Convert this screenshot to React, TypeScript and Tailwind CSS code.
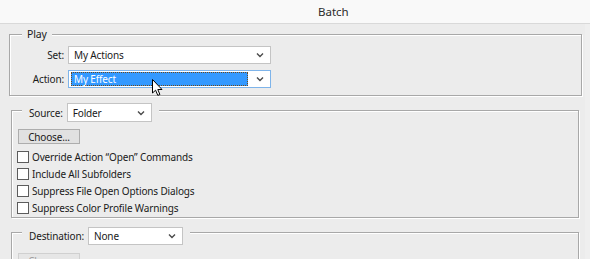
import React from "react";

function Chevron() {
  return (
    <svg width="8" height="6" viewBox="0 0 8 6" className="shrink-0">
      <path d="M1 1.5 L4 4.5 L7 1.5" fill="none" stroke="#4a4a4a" strokeWidth="1.4" />
    </svg>
  );
}

function Select({
  value,
  width,
  active,
}: {
  value: string;
  width: string;
  active?: boolean;
}) {
  return (
    <div
      className={`flex h-[18px] items-center justify-between bg-white pr-[6px] ${width} ${
        active ? "border border-[#7eb4ea] pl-[2px]" : "border border-[#c4c4c4] pl-[5px]"
      }`}
    >
      {active ? (
        <div className="mr-[8px] flex h-[14px] flex-1 items-center border border-dotted border-[#6b4a1e] bg-[#3399ff] pl-[2px] text-white">
          {value}
        </div>
      ) : (
        <span className="text-[#1a1a1a]">{value}</span>
      )}
      <Chevron />
    </div>
  );
}

function Check({ label }: { label: string }) {
  return (
    <div className="flex h-[17px] items-center gap-[3px] pl-[5px]">
      <div className="h-[12px] w-[12px] border border-[#5c5c5c] bg-white" />
      <span className="text-[#1a1a1a]">{label}</span>
    </div>
  );
}

const groupBorder =
  "border border-[#a8a8a8] shadow-[inset_1px_1px_0_#ffffff,1px_1px_0_#ffffff]";

export default function App() {
  return (
    <div
      className="relative h-[259px] w-[590px] overflow-hidden bg-[#efefef] text-[10px] leading-[16px] tracking-[-0.15px] text-[#1a1a1a]"
      style={{ fontFamily: '"Noto Sans", "Open Sans", Arial, sans-serif' }}
    >
      {/* title bar */}
      <div className="flex h-[24px] items-center border-b border-[#d9d9d9] bg-[#f9f9f9] pl-[318px] text-[11.5px] tracking-normal text-[#2b2b2b]">
        Batch
      </div>

      <div className="flex h-[235px] w-[585px] flex-col bg-[#ececec]">
        {/* Play group */}
        <div className={`ml-[9px] mt-[10px] h-[62px] w-[573px] shrink-0 ${groupBorder}`}>
          <div className="-mt-[9px] ml-[12px] w-fit bg-[#ececec] px-[5px] text-[10.5px]">Play</div>
          <div className="mt-[4px] flex items-center gap-[4px]">
            <div className="w-[54px] text-right">Set:</div>
            <Select value="My Actions" width="w-[203px]" />
          </div>
          <div className="mt-[6px] flex items-center gap-[4px]">
            <div className="w-[54px] text-right">Action:</div>
            <Select value="My Effect" width="w-[203px]" active />
          </div>
        </div>

        {/* Source group */}
        <div className={`ml-[11px] mt-[14px] h-[108px] w-[568px] shrink-0 ${groupBorder}`}>
          <div className="-mt-[8px] ml-[10px] flex w-fit items-center gap-[4px] bg-[#ececec] px-[7px]">
            <span>Source:</span>
            <div className="flex h-[19px] w-[85px] items-center justify-between border border-[#c4c4c4] bg-white pl-[5px] pr-[6px]">
              <span>Folder</span>
              <Chevron />
            </div>
          </div>
          <div className="ml-[6px] mt-[7px] flex h-[15px] w-[62px] items-center justify-center border border-[#adadad] bg-[#e1e1e1] text-[#1a1a1a]">
            Choose...
          </div>
          <div className="mt-[4px] flex flex-col">
            <Check label="Override Action “Open” Commands" />
            <Check label="Include All Subfolders" />
            <Check label="Suppress File Open Options Dialogs" />
            <Check label="Suppress Color Profile Warnings" />
          </div>
        </div>

        {/* Destination group */}
        <div className={`ml-[11px] mt-[14px] h-[60px] w-[568px] shrink-0 ${groupBorder}`}>
          <div className="-mt-[6px] ml-[10px] flex w-fit items-center gap-[4px] bg-[#ececec] px-[7px]">
            <span>Destination:</span>
            <div className="flex h-[18px] w-[95px] items-center justify-between border border-[#c4c4c4] bg-white pl-[5px] pr-[6px]">
              <span>None</span>
              <Chevron />
            </div>
          </div>
          <div className="ml-[6px] mt-[8px] flex h-[15px] w-[62px] items-start justify-center border border-[#d0d0d0] bg-[#e6e6e6] pt-[1px] leading-[12px] text-[#a0a0a0]">
            Choose...
          </div>
        </div>
      </div>

      {/* mouse cursor */}
      <svg
        className="absolute left-[152px] top-[79px]"
        width="12"
        height="18"
        viewBox="0 0 12 18"
      >
        <path
          d="M0.5 0.5 L0.5 14 L3.6 11.2 L5.8 16.4 L7.9 15.5 L5.8 10.5 L10 10.5 Z"
          fill="#ffffff"
          stroke="#000000"
          strokeWidth="1"
          strokeLinejoin="miter"
        />
      </svg>
    </div>
  );
}
